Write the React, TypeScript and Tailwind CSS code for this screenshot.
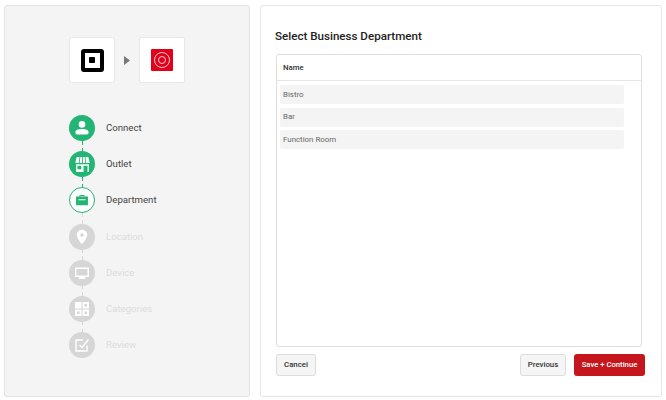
import type { ReactNode } from "react";

const FONT = "font-['Roboto','Liberation_Sans',sans-serif]";

function UserIcon() {
  return (
    <svg viewBox="0 0 16 16" className="size-[16px]" fill="#fff">
      <circle cx="8" cy="4.400" r="3.300" />
      <path d="M1.400 12.400c0-2.200 2.600-3.400 6.600-3.400s6.600 1.200 6.600 3.400c0 1.400-1 2.200-2.400 2.200H3.800c-1.400 0-2.400-.8-2.400-2.200z" />
    </svg>
  );
}

function StoreIcon() {
  return (
    <svg viewBox="0 0 16 16" className="size-[17px]" fill="#fff">
      <path d="M2.500 1h2.700L4.500 6.500H1.200zM6 1h1.600v5.500H5.300zM8.400 1H10l.7 5.500H8.400zM10.800 1h2.700l1.300 5.500h-3.300z" />
      <path fillRule="evenodd" d="M2 7.800h12V15H2zM3.300 9.200v3.300h3.600V9.200zM9 9.200V15h3.700V9.200z" />
    </svg>
  );
}

function CaseIcon() {
  return (
    <svg viewBox="0 0 16 16" className="size-[14px]" fill="#22b573">
      <path d="M5 4V2.400h6V4h-1.100v-.6H6.100V4z" />
      <path fillRule="evenodd" d="M1.200 4h13.600v10H1.200zM4 7.200v1h8v-1z" />
    </svg>
  );
}

function PinIcon() {
  return (
    <svg viewBox="0 0 16 16" className="size-[16px]" fill="#fff">
      <path
        fillRule="evenodd"
        d="M8 .8c-3 0-5.200 2.200-5.200 5.100C2.800 9.500 8 15.200 8 15.200s5.200-5.700 5.200-9.300C13.200 3 11 .8 8 .8zm0 3.400a1.800 1.800 0 1 1 0 3.600 1.800 1.800 0 0 1 0-3.600z"
      />
    </svg>
  );
}

function MonitorIcon() {
  return (
    <svg viewBox="0 0 16 16" className="size-[16px]" fill="#fff">
      <path fillRule="evenodd" d="M1 2.500h14v9.500H1zM2.500 4v6.500h11V4z" />
      <path d="M5.500 12h5l1 2h-7z" />
    </svg>
  );
}

function GridIcon() {
  return (
    <svg viewBox="0 0 16 16" className="size-[16px]" fill="#fff">
      <rect x="1" y="1" width="6.500" height="6.500" />
      <path fillRule="evenodd" d="M8.500 1H15v6.500H8.500zM10.500 3v2.500H13V3z" />
      <path fillRule="evenodd" d="M1 8.500h6.500V15H1zM3 10.500V13h2.500v-2.500z" />
      <path fillRule="evenodd" d="M8.500 8.500H15V15H8.500zM10.500 10.500V13H13v-2.500z" />
    </svg>
  );
}

function CheckBoxIcon() {
  return (
    <svg viewBox="0 0 16 16" className="size-[16px]" fill="none" stroke="#fff" strokeWidth="1.400">
      <path d="M13 8.500V14H2V3h7" />
      <path d="M5.500 8l2.500 2.500L14.500 2.500" />
    </svg>
  );
}

type Step = { label: string; icon: ReactNode; state: "done" | "current" | "todo" };

const STEPS: Step[] = [
  { label: "Connect", icon: <UserIcon />, state: "done" },
  { label: "Outlet", icon: <StoreIcon />, state: "done" },
  { label: "Department", icon: <CaseIcon />, state: "current" },
  { label: "Location", icon: <PinIcon />, state: "todo" },
  { label: "Device", icon: <MonitorIcon />, state: "todo" },
  { label: "Categories", icon: <GridIcon />, state: "todo" },
  { label: "Review", icon: <CheckBoxIcon />, state: "todo" },
];

const CIRCLE: Record<Step["state"], string> = {
  done: "bg-[#22b573]",
  current: "border border-[#22b573] bg-white",
  todo: "bg-[#d6d6d6]",
};

const LINE: Record<Step["state"], string> = {
  done: "bg-[#22b573]",
  current: "bg-[#d9d9d9]",
  todo: "bg-[#d6d6d6]",
};

const LABEL: Record<Step["state"], string> = {
  done: "text-[#444]",
  current: "text-[#444]",
  todo: "text-[#dcdcdc]",
};

function StepRow({ step, last }: { step: Step; last: boolean }) {
  return (
    <div className="flex items-start gap-[11px]">
      <div className="flex w-[26px] flex-col items-center">
        <div className={`flex size-[26px] items-center justify-center rounded-full ${CIRCLE[step.state]}`}>
          {step.icon}
        </div>
        {!last && (
          <div className="flex h-[10.200px] flex-col justify-between">
            <div className={`h-[3.500px] w-px ${LINE[step.state]}`} />
            <div className={`h-[3.500px] w-px ${LINE[step.state]}`} />
          </div>
        )}
      </div>
      <span className={`text-[9.600px] leading-[25px] ${LABEL[step.state]}`}>{step.label}</span>
    </div>
  );
}

function LogoTile({ children }: { children: ReactNode }) {
  return (
    <div className="flex size-[46px] items-center justify-center rounded-[2px] border border-[#e8e8e8] bg-white">
      {children}
    </div>
  );
}

export default function App() {
  return (
    <div className={`flex h-[400px] w-[666px] gap-[10px] bg-white pt-[5px] pr-[4px] pb-[3px] pl-[4px] ${FONT}`}>
      <aside className="flex w-[246px] flex-col rounded-[3px] border border-[#e3e3e3] bg-[#f4f4f4] pt-[31px] pl-[64px]">
        <div className="flex items-center">
          <LogoTile>
            <div className="flex size-[23px] items-center justify-center rounded-[3px] border-[4px] border-black bg-white">
              <div className="size-[6px] rounded-[1px] bg-black" />
            </div>
          </LogoTile>
          <div className="flex w-[24px] justify-center">
            <svg viewBox="0 0 6 9" className="h-[9px] w-[6px]" fill="#777">
              <path d="M0 0l6 4.500L0 9z" />
            </svg>
          </div>
          <LogoTile>
            <div className="flex size-[22px] items-center justify-center rounded-[1px] bg-[#e2001a]">
              <div className="flex size-[16px] items-center justify-center rounded-full border-[1.500px] border-[#f9d0d3]">
                <div className="size-[8px] rounded-full border-[1.500px] border-[#f9d0d3]" />
              </div>
            </div>
          </LogoTile>
        </div>
        <div className="mt-[32px] flex flex-col">
          {STEPS.map((s, i) => (
            <StepRow key={s.label} step={s} last={i === STEPS.length - 1} />
          ))}
        </div>
      </aside>

      <main className="flex w-[402px] flex-col rounded-[3px] border border-[#e6e6e6] bg-white pt-[22px] pr-[15px] pb-[20px] pl-[14px]">
        <h1 className="text-[11.600px] leading-[16px] font-medium text-[#222]">Select Business Department</h1>
        <div className="mt-[10px] ml-px flex h-[293px] w-[366px] flex-col rounded-[3px] border border-[#dedede]">
          <div className="flex h-[26px] items-center border-b border-[#e6e6e6] pl-[6px] text-[7.800px] font-medium text-[#333]">
            Name
          </div>
          <div className="flex flex-col gap-[3.500px] pt-[4px] pl-[3px]">
            {["Bistro", "Bar", "Function Room"].map((name) => (
              <div key={name} className="flex h-[19px] w-[344px] items-center rounded-[2px] bg-[#f4f4f4] pl-[3px] text-[7.900px] text-[#666]">
                {name}
              </div>
            ))}
          </div>
        </div>
        <div className="mt-[7px] ml-px mr-px flex items-center">
          <button className="h-[22px] w-[40px] rounded-[3px] border border-[#dcdcdc] bg-[#f5f5f5] text-[7.800px] font-medium text-[#333]">
            Cancel
          </button>
          <button className="ml-auto h-[22px] w-[46px] rounded-[3px] border border-[#dcdcdc] bg-[#f5f5f5] text-[7.800px] font-medium text-[#333]">
            Previous
          </button>
          <button className="ml-[8px] h-[22px] w-[71px] rounded-[3px] bg-[#c4161c] text-[7.700px] font-medium text-white">
            Save + Continue
          </button>
        </div>
      </main>
    </div>
  );
}
